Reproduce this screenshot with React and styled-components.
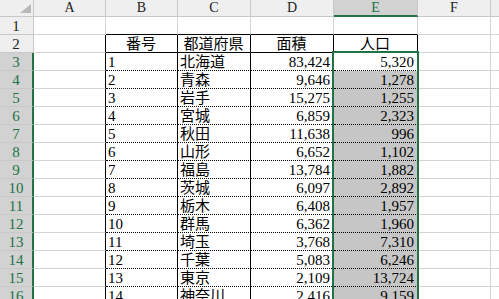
import React from "react";
import styled, { createGlobalStyle } from "styled-components";

const GREEN = "#217346";
const GRID = "#d4d4d4";
const HEAD_BG = "#efefef";
const HEAD_SEL = "#d2d2d2";
const HEAD_LINE = "#c8c8c8";
const SEL_BG = "#c6c6c6";
const FONT = '"Liberation Serif", "Noto Sans CJK JP", serif';

const GlobalStyle = createGlobalStyle`
  html, body { margin: 0; padding: 0; background: #fff; overflow: hidden; }
  body { width: 499px; height: 299px; }
`;

const Sheet = styled.div`
  position: relative;
  width: 499px;
  height: 299px;
  overflow: hidden;
  display: grid;
  grid-template-columns: 34px 72px 72px 73px 83px 84px 73px 73px;
  grid-template-rows: 17px repeat(16, 18px);
  font-family: ${FONT};
  font-size: 15px;
  color: #000;
`;

const Corner = styled.div`
  position: relative;
  box-sizing: border-box;
  background: ${HEAD_BG};
  border-right: 1px solid ${HEAD_LINE};
  border-bottom: 1px solid ${HEAD_LINE};
`;

const CornerMark = styled.svg`
  position: absolute;
  right: 2px;
  bottom: 3px;
`;

const ColHead = styled.div`
  box-sizing: border-box;
  background: ${(p) => (p.$selected ? HEAD_SEL : HEAD_BG)};
  color: ${(p) => (p.$selected ? GREEN : "#222")};
  border-right: 1px solid ${HEAD_LINE};
  border-bottom: ${(p) => (p.$selected ? `2px solid ${GREEN}` : `1px solid ${HEAD_LINE}`)};
  text-align: center;
  font-size: 14px;
  line-height: 16px;
`;

const RowHead = styled.div`
  box-sizing: border-box;
  background: ${(p) => (p.$selected ? HEAD_SEL : HEAD_BG)};
  color: ${(p) => (p.$selected ? GREEN : "#222")};
  border-right: ${(p) => (p.$selected ? `2px solid ${GREEN}` : `1px solid ${HEAD_LINE}`)};
  border-bottom: 1px solid ${HEAD_LINE};
  text-align: center;
  font-size: 15px;
  line-height: 18px;
  padding-right: ${(p) => (p.$selected ? "0" : "1px")};
`;

const Cell = styled.div`
  box-sizing: border-box;
  background: ${(p) => p.$bg || "#fff"};
  border-right: ${(p) => p.$right};
  border-bottom: ${(p) => p.$bottom};
  text-align: ${(p) => p.$align || "left"};
  padding: 0 3px 0 2px;
  line-height: 18px;
  white-space: nowrap;
  overflow: hidden;
`;

const SelectionBox = styled.div`
  position: absolute;
  left: 332px;
  top: 51px;
  width: 87px;
  height: 260px;
  box-sizing: border-box;
  border: 2px solid ${GREEN};
  pointer-events: none;
`;

const COLS = ["A", "B", "C", "D", "E", "F", "G"];

const DATA = [
  ["1", "北海道", "83,424", "5,320"],
  ["2", "青森", "9,646", "1,278"],
  ["3", "岩手", "15,275", "1,255"],
  ["4", "宮城", "6,859", "2,323"],
  ["5", "秋田", "11,638", "996"],
  ["6", "山形", "6,652", "1,102"],
  ["7", "福島", "13,784", "1,882"],
  ["8", "茨城", "6,097", "2,892"],
  ["9", "栃木", "6,408", "1,957"],
  ["10", "群馬", "6,362", "1,960"],
  ["11", "埼玉", "3,768", "7,310"],
  ["12", "千葉", "5,083", "6,246"],
  ["13", "東京", "2,109", "13,724"],
  ["14", "神奈川", "2,416", "9,159"],
];

const HEADER = ["番号", "都道府県", "面積", "人口"];

function cellContent(r, c) {
  if (c < 2 || c > 5) return { text: "" };
  if (r === 2) return { text: HEADER[c - 2], align: "center" };
  if (r >= 3) {
    const row = DATA[r - 3];
    if (!row) return { text: "" };
    return { text: row[c - 2], align: c >= 4 ? "right" : "left" };
  }
  return { text: "" };
}

function borders(r, c) {
  const inTable = c >= 2 && c <= 5;
  let right = `1px solid ${GRID}`;
  if (r >= 2 && c >= 1 && c <= 5) right = "1px solid #000";
  let bottom = `1px solid ${GRID}`;
  if (inTable) {
    if (r <= 2) bottom = "1px solid #000";
    else bottom = "1px dotted #000";
  }
  return { right, bottom };
}

export default function App() {
  const rows = [];
  for (let r = 1; r <= 16; r++) {
    rows.push(
      <RowHead key={`rh${r}`} $selected={r >= 3}>
        {r}
      </RowHead>
    );
    for (let c = 1; c <= 7; c++) {
      const { text, align } = cellContent(r, c);
      const { right, bottom } = borders(r, c);
      const bg = c === 5 && r >= 4 ? SEL_BG : "#fff";
      rows.push(
        <Cell key={`c${r}-${c}`} $right={right} $bottom={bottom} $align={align} $bg={bg}>
          {text}
        </Cell>
      );
    }
  }

  return (
    <>
      <GlobalStyle />
      <Sheet>
        <Corner>
          <CornerMark width="11" height="9" viewBox="0 0 11 9">
            <polygon points="11,0 11,9 0,9" fill="#b9b9b9" />
          </CornerMark>
        </Corner>
        {COLS.map((l) => (
          <ColHead key={l} $selected={l === "E"}>
            {l}
          </ColHead>
        ))}
        {rows}
        <SelectionBox />
      </Sheet>
    </>
  );
}
